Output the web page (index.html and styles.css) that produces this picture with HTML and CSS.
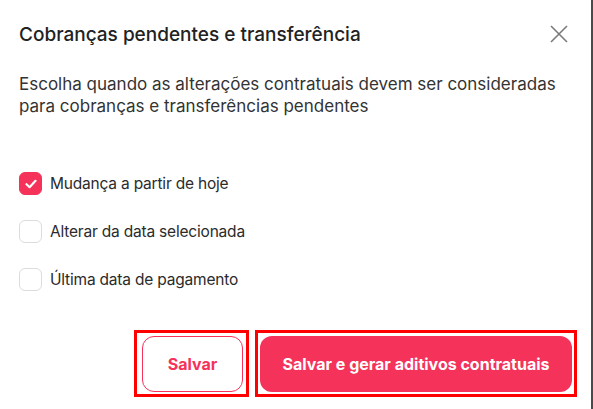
FILE: index.html
```html
<!DOCTYPE html>
<html lang="pt-BR">
<head>
<meta charset="utf-8">
<link rel="stylesheet" href="styles.css">
</head>
<body>
<div class="modal">
  <div class="header">
    <h1 class="title">Cobranças pendentes e transferência</h1>
    <button class="close" aria-label="Fechar">
      <svg width="18" height="18" viewBox="0 0 18 18"><path d="M1 1L17 17M17 1L1 17" stroke="#7a7a7a" stroke-width="1.6" fill="none"/></svg>
    </button>
  </div>
  <p class="desc">Escolha quando as alterações contratuais devem ser consideradas para cobranças e transferências pendentes</p>
  <div class="options">
    <label class="option">
      <span class="box checked"><svg width="12" height="10" viewBox="0 0 12 10"><path d="M1.5 5.2L4.6 8.2L10.5 1.8" stroke="#fff" stroke-width="2.2" fill="none" stroke-linecap="round" stroke-linejoin="round"/></svg></span>
      <span class="label">Mudança a partir de hoje</span>
    </label>
    <label class="option">
      <span class="box"></span>
      <span class="label">Alterar da data selecionada</span>
    </label>
    <label class="option">
      <span class="box"></span>
      <span class="label">Última data de pagamento</span>
    </label>
  </div>
  <div class="actions">
    <div class="mark mark-a"><button class="btn btn-outline">Salvar</button></div>
    <div class="mark mark-b"><button class="btn btn-primary">Salvar e gerar aditivos contratuais</button></div>
  </div>
</div>
</body>
</html>
```
FILE: styles.css
```css
* { box-sizing: border-box; }
html, body { margin: 0; padding: 0; }
body {
  width: 593px;
  height: 409px;
  background: #4a4a4a;
  font-family: Inter, "Noto Sans", sans-serif;
  overflow: hidden;
}
.modal {
  width: 591px;
  height: 417px;
  background: #fff;
  border-radius: 0 0 9px 0;
  padding: 0 0 0 19px;
}
.header {
  display: flex;
  align-items: center;
  justify-content: space-between;
  padding: 21px 23px 0 0;
  height: 47px;
}
.title {
  margin: 0;
  font-size: 19px;
  font-weight: 500;
  color: #222;
}
.close {
  border: 0;
  background: none;
  padding: 0;
  width: 18px;
  height: 18px;
  display: flex;
}
.desc {
  margin: 26px 0 0;
  font-size: 17px;
  line-height: 22px;
  color: #333;
  width: 545px;
}
.options {
  display: flex;
  flex-direction: column;
  gap: 25px;
  margin-top: 55px;
}
.option {
  display: flex;
  align-items: center;
  gap: 8px;
  height: 23px;
}
.box {
  width: 23px;
  height: 23px;
  border: 1px solid #dcdcdc;
  border-radius: 6px;
  display: flex;
  align-items: center;
  justify-content: center;
  background: #fff;
}
.box.checked {
  background: #f5325a;
  border-color: #f5325a;
}
.label {
  font-size: 15.5px;
  color: #2b2b2b;
  letter-spacing: -0.2px;
}
.actions {
  display: flex;
  justify-content: flex-end;
  gap: 6px;
  margin-top: 39px;
  padding-right: 14px;
}
.mark {
  border: 3px solid #ff0000;
  height: 67px;
  display: flex;
  align-items: center;
}
.mark-a { width: 115px; padding: 0 3px 0 5px; }
.mark-b { width: 322px; padding: 0 2px; }
.btn {
  font-family: Inter, "Noto Sans", sans-serif;
  font-weight: 650;
  font-size: 16px;
  height: 56px;
  border-radius: 12px;
  cursor: pointer;
}
.btn-outline {
  width: 102px;
  background: #fff;
  border: 1.5px solid #f5325a;
  color: #f5325a;
}
.btn-primary {
  width: 315px;
  background: #f5325a;
  border: 0;
  color: #fff;
}
```
